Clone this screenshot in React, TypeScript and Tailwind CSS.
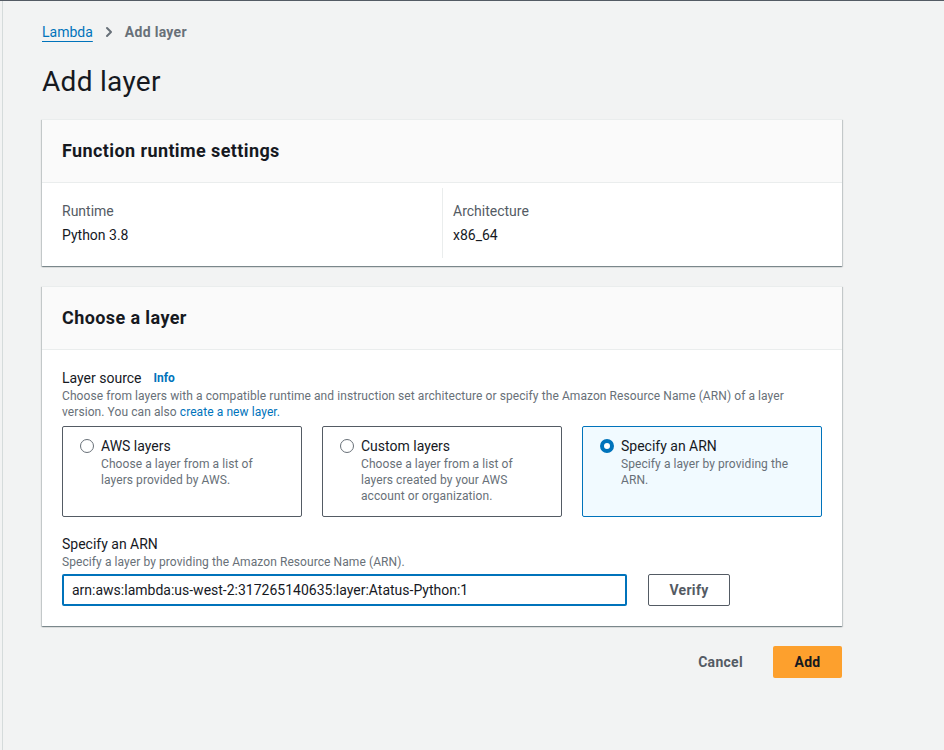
import { ChevronRight } from 'lucide-react'

const font = { fontFamily: 'Roboto, "Noto Sans", Arial, sans-serif' }

const tiles = [
  { title: 'AWS layers', lines: ['Choose a layer from a list of', 'layers provided by AWS.'], selected: false },
  {
    title: 'Custom layers',
    lines: ['Choose a layer from a list of', 'layers created by your AWS', 'account or organization.'],
    selected: false,
  },
  { title: 'Specify an ARN', lines: ['Specify a layer by providing the', 'ARN.'], selected: true },
]

const cardClass =
  'bg-white border-t border-[#eaeded] shadow-[0_1px_1px_0_rgba(0,28,36,0.3),1px_1px_1px_0_rgba(0,28,36,0.15),-1px_1px_1px_0_rgba(0,28,36,0.15)]'

const CardHeader = ({ title }: { title: string }) => (
  <div className="bg-[#fafafa] border-b border-[#eaeded] px-5 pt-[20px] pb-[20px]">
    <h2 className="text-[18px] leading-[22px] font-bold tracking-[0.4px] text-[#16191f]">{title}</h2>
  </div>
)

export default function App() {
  return (
    <div className="min-h-screen bg-[#f2f3f3] border-t border-[#545b64] pl-[2px]" style={font}>
      <div className="min-h-[749px] border-l border-[#d5dbdb] pl-[39px] pt-[20px]">
        <div className="w-[800px]">
          {/* Breadcrumbs */}
          <nav className="flex items-center text-[14px] leading-[22px]">
            <a className="text-[#0073bb] underline underline-offset-[4px]">Lambda</a>
            <ChevronRight className="w-4 h-4 mx-[8px] text-[#687078]" strokeWidth={3} />
            <span className="font-bold tracking-[0.3px] text-[#687078]">Add layer</span>
          </nav>

          <h1 className="mt-[21px] text-[28px] leading-[36px] tracking-[0.3px] text-[#16191f]">Add layer</h1>

          {/* Function runtime settings */}
          <section className={`${cardClass} mt-[19px]`}>
            <CardHeader title="Function runtime settings" />
            <div className="grid grid-cols-2 px-5 pt-[5px] pb-[8px]">
              <div className="py-[11px] text-[14px] leading-[24px]">
                <div className="text-[#545b64]">Runtime</div>
                <div className="text-[#16191f]">Python 3.8</div>
              </div>
              <div className="py-[11px] pl-[10px] border-l border-[#eaeded] text-[14px] leading-[24px]">
                <div className="text-[#545b64]">Architecture</div>
                <div className="text-[#16191f]">x86_64</div>
              </div>
            </div>
          </section>

          {/* Choose a layer */}
          <section className={`${cardClass} mt-[20px]`}>
            <CardHeader title="Choose a layer" />
            <div className="px-5 pt-[18px] pb-[20px]">
              <div className="flex items-center gap-[12px] text-[14px] leading-[20px] text-[#16191f]">
                <span>Layer source</span>
                <a className="text-[12px] font-bold text-[#0073bb]">Info</a>
              </div>
              <p className="text-[12px] leading-[16px] tracking-[0.08px] text-[#687078]">
                Choose from layers with a compatible runtime and instruction set architecture or specify the Amazon
                Resource Name (ARN) of a layer
                <br />
                version. You can also <a className="text-[#0073bb]">create a new layer.</a>
              </p>

              <div className="grid grid-cols-3 gap-5 mt-[6px]">
                {tiles.map((t) => (
                  <div
                    key={t.title}
                    className={`h-[91px] rounded-[2px] border pl-[17px] pr-[10px] pt-[9px] flex gap-[7px] ${
                      t.selected ? 'border-[#0073bb] bg-[#f1faff]' : 'border-[#545b64] bg-white'
                    }`}
                  >
                    <div className="pt-[3px]">
                      {t.selected ? (
                        <span className="block w-[14px] h-[14px] rounded-full border-[4px] border-[#0073bb] bg-white" />
                      ) : (
                        <span className="block w-[14px] h-[14px] rounded-full border-[1.5px] border-[#687078] bg-white" />
                      )}
                    </div>
                    <div>
                      <div className="text-[14px] leading-[20px] text-[#16191f]">{t.title}</div>
                      <div className="text-[12px] leading-[16px] tracking-[0.08px] text-[#687078]">
                        {t.lines.map((l) => (
                          <div key={l}>{l}</div>
                        ))}
                      </div>
                    </div>
                  </div>
                ))}
              </div>

              <div className="mt-[17px] text-[14px] leading-[20px] text-[#16191f]">Specify an ARN</div>
              <div className="text-[12px] leading-[16px] tracking-[0.08px] text-[#687078]">
                Specify a layer by providing the Amazon Resource Name (ARN).
              </div>
              <div className="flex items-center gap-[21px] mt-[4px]">
                <input
                  readOnly
                  value="arn:aws:lambda:us-west-2:317265140635:layer:Atatus-Python:1"
                  className="w-[565px] h-[32px] rounded-[2px] border-2 border-[#0073bb] px-[8px] text-[14px] text-[#16191f] outline-none bg-white"
                  style={font}
                />
                <button className="w-[82px] h-[32px] rounded-[2px] border border-[#545b64] bg-white text-[14px] font-bold tracking-[0.3px] text-[#545b64]">
                  Verify
                </button>
              </div>
            </div>
          </section>

          {/* Actions */}
          <div className="flex justify-end items-center mt-[20px] gap-[30px]">
            <button className="text-[14px] font-bold tracking-[0.3px] text-[#545b64]">Cancel</button>
            <button className="w-[69px] h-[32px] rounded-[2px] bg-[#fda02d] text-[14px] font-bold tracking-[0.3px] text-[#16191f]">
              Add
            </button>
          </div>
        </div>
      </div>
    </div>
  )
}
